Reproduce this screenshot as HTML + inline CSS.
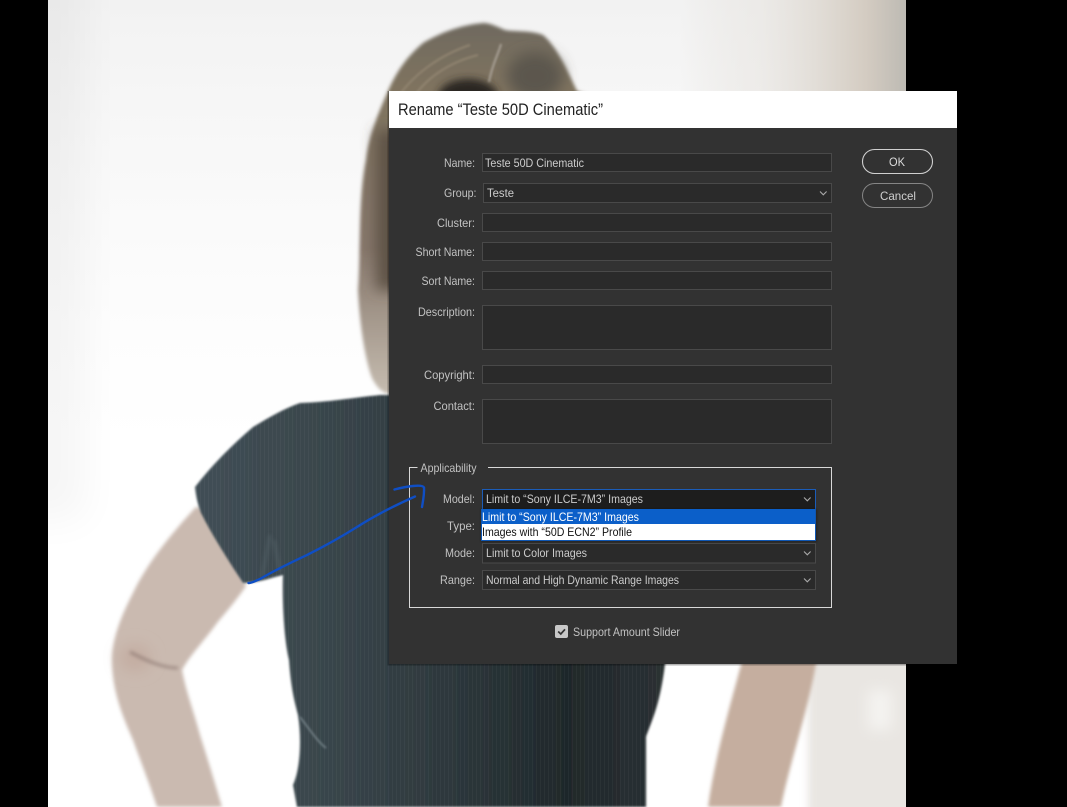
<!DOCTYPE html>
<html><head><meta charset="utf-8"><style>
html,body{margin:0;padding:0;background:#000;width:1067px;height:807px;overflow:hidden}
svg{position:absolute;left:0;top:0;display:block}
text{font-family:"Liberation Sans",sans-serif;font-size:12px;fill:#c2c2c2}
.v{fill:#cccccc}
.f{fill:#2a2a2a;stroke:#494949;stroke-width:1}
.c{fill:none;stroke:#a8a8a8;stroke-width:1.1}
</style></head><body>
<svg width="1067" height="807" viewBox="0 0 1067 807" xmlns="http://www.w3.org/2000/svg">
<defs>
<clipPath id="ph"><rect x="48" y="0" width="858" height="807"/></clipPath>
<filter id="b20" filterUnits="userSpaceOnUse" x="-200" y="-200" width="1500" height="1300"><feGaussianBlur stdDeviation="20"/></filter>
<filter id="b8" filterUnits="userSpaceOnUse" x="-200" y="-200" width="1500" height="1300"><feGaussianBlur stdDeviation="7"/></filter>
<filter id="b4" filterUnits="userSpaceOnUse" x="-200" y="-200" width="1500" height="1300"><feGaussianBlur stdDeviation="4"/></filter>
<filter id="b2" filterUnits="userSpaceOnUse" x="-200" y="-200" width="1500" height="1300"><feGaussianBlur stdDeviation="1.8"/></filter>
<filter id="b1" filterUnits="userSpaceOnUse" x="-200" y="-200" width="1500" height="1300"><feGaussianBlur stdDeviation="1"/></filter>
<linearGradient id="bgv" x1="0" y1="0" x2="0" y2="1"><stop offset="0" stop-color="#f2f2f2"/><stop offset=".19" stop-color="#f8f8f8"/><stop offset=".41" stop-color="#fdfdfd"/><stop offset=".55" stop-color="#fff"/><stop offset="1" stop-color="#fff"/></linearGradient>
<linearGradient id="bgr" x1="0" y1="0" x2="1" y2="0"><stop offset="0" stop-color="#e2ded8" stop-opacity="0"/><stop offset=".35" stop-color="#e8e5e1" stop-opacity=".6"/><stop offset=".65" stop-color="#dfdad3"/><stop offset=".82" stop-color="#d4ccc2"/><stop offset="1" stop-color="#bdbab3"/></linearGradient>
<linearGradient id="hair" gradientUnits="userSpaceOnUse" x1="0" y1="20" x2="0" y2="400"><stop offset="0" stop-color="#6e695e"/><stop offset=".18" stop-color="#7f735f"/><stop offset=".6" stop-color="#85766a"/><stop offset="1" stop-color="#c8bfb3"/></linearGradient>
<linearGradient id="shirt" gradientUnits="userSpaceOnUse" x1="190" y1="0" x2="660" y2="0"><stop offset="0" stop-color="#414f56"/><stop offset=".3" stop-color="#39454b"/><stop offset=".6" stop-color="#2b3539"/><stop offset=".8" stop-color="#1f282b"/><stop offset="1" stop-color="#2a3033"/></linearGradient>
<pattern id="rib" width="4" height="10" patternUnits="userSpaceOnUse"><rect x="0" width="1" height="10" fill="#fff" opacity=".035"/></pattern>
</defs>
<rect width="1067" height="807" fill="#000"/>
<g clip-path="url(#ph)">
<rect x="48" y="0" width="858" height="807" fill="url(#bgv)"/>
<rect x="10" y="-60" width="75" height="580" fill="#000" opacity=".035" filter="url(#b20)"/>
<rect x="680" y="0" width="226" height="91" fill="url(#bgr)"/>
<rect x="808" y="655" width="120" height="170" fill="#e9e6e2" filter="url(#b4)"/>
<rect x="868" y="690" width="24" height="40" fill="#f4f3f0" filter="url(#b8)"/>
<path d="M483 23C460 25 440 33 423 43C405 58 395 75 388 91C376 118 368 140 366 160C358 200 361 250 358 290C360 330 366 362 372 378C378 390 384 394 395 395L600 395L600 100L577 91C565 65 555 45 543 35C530 30 515 32 505 30C498 27 490 23 483 23Z" fill="url(#hair)" filter="url(#b2)"/>
<rect x="376" y="130" width="30" height="160" fill="#5f5246" filter="url(#b8)"/>
<ellipse cx="468" cy="97" rx="30" ry="18" fill="#2b2724" filter="url(#b4)"/>
<ellipse cx="535" cy="76" rx="28" ry="24" fill="#5c574d" filter="url(#b8)"/>
<path d="M470 45C440 55 412 75 396 100M478 55C450 62 425 78 412 100" stroke="#968975" stroke-width="2" fill="none" filter="url(#b1)" opacity=".8"/>
<path d="M501 44C498 55 492 65 489 82" stroke="#a9a196" stroke-width="2" fill="none" filter="url(#b1)"/>
<path d="M196 507C170 535 146 565 133 593C120 618 112 640 112 660C112 690 122 715 133 740C142 765 150 785 157 807L222 807C214 780 208 760 200 735C194 712 186 692 182 670C190 655 205 640 217 623C228 610 238 598 246 586L210 510Z" fill="#cabab0" filter="url(#b2)"/>
<ellipse cx="135" cy="658" rx="16" ry="14" fill="#c4aea3" filter="url(#b8)"/>
<path d="M130 652C145 660 162 668 178 668" stroke="#8a766f" stroke-width="3" fill="none" filter="url(#b2)" opacity=".65"/>
<path d="M745 650L818 650C812 700 790 760 781 807L708 807C716 750 732 700 745 650Z" fill="#c5ae9f" filter="url(#b2)"/>
<g filter="url(#b1)">
<path d="M300 403C285 408 268 418 253 427C232 445 212 465 195 487C196 497 198 505 201 513C212 535 228 560 243 583C258 583 270 578 283 575C282 600 284 640 289 660C291 690 295 703 298 715C302 740 300 770 293 785L297 807L646 807L646 737C652 720 660 705 665 664L665 395L380 395C350 398 330 402 300 403Z" fill="url(#shirt)"/>
</g>
<path d="M300 403C285 408 268 418 253 427C232 445 212 465 195 487C196 497 198 505 201 513C212 535 228 560 243 583C258 583 270 578 283 575C282 600 284 640 289 660C291 690 295 703 298 715C302 740 300 770 293 785L297 807L646 807L646 737C652 720 660 705 665 664L665 395L380 395C350 398 330 402 300 403Z" fill="url(#rib)"/>
<path d="M300 717C310 730 318 742 326 748" stroke="#78868c" stroke-width="1.6" fill="none" filter="url(#b1)"/>
<path d="M262 577L270 535M280 572L274 540" stroke="#5a696f" stroke-width="3" fill="none" filter="url(#b2)" opacity=".5"/>
</g>
<rect x="387.5" y="91" width="570.5" height="574.5" fill="#000" opacity=".3"/>
<rect x="389" y="128" width="568" height="536" fill="#323232"/>
<rect x="389" y="91" width="568" height="37" fill="#fff"/>
<text x="398" y="115" textLength="205" lengthAdjust="spacingAndGlyphs" style="font-size:16.5px;fill:#222">Rename “Teste 50D Cinematic”</text>

<text x="444" y="167" textLength="31" lengthAdjust="spacingAndGlyphs">Name:</text>
<rect class="f" x="482.5" y="153.5" width="349" height="18"/>
<text class="v" x="485" y="167" textLength="99" lengthAdjust="spacingAndGlyphs">Teste 50D Cinematic</text>

<text x="444" y="197" textLength="32.5" lengthAdjust="spacingAndGlyphs">Group:</text>
<rect class="f" x="483.5" y="183.5" width="348" height="19"/>
<text class="v" x="487" y="197" textLength="27" lengthAdjust="spacingAndGlyphs">Teste</text>
<path class="c" d="M820 191.5L823.3 194.8L826.6 191.5"/>

<text x="437" y="227" textLength="38" lengthAdjust="spacingAndGlyphs">Cluster:</text>
<rect class="f" x="482.5" y="213.5" width="349" height="18"/>
<text x="415.5" y="256" textLength="59.5" lengthAdjust="spacingAndGlyphs">Short Name:</text>
<rect class="f" x="482.5" y="242.5" width="349" height="18"/>
<text x="421.5" y="285" textLength="53.5" lengthAdjust="spacingAndGlyphs">Sort Name:</text>
<rect class="f" x="482.5" y="271.5" width="349" height="18"/>
<text x="418" y="316" textLength="57" lengthAdjust="spacingAndGlyphs">Description:</text>
<rect class="f" x="482.5" y="305.5" width="349" height="44"/>
<text x="424" y="379" textLength="51" lengthAdjust="spacingAndGlyphs">Copyright:</text>
<rect class="f" x="482.5" y="365.5" width="349" height="18"/>
<text x="433.5" y="410" textLength="41.5" lengthAdjust="spacingAndGlyphs">Contact:</text>
<rect class="f" x="482.5" y="399.5" width="349" height="44"/>

<rect x="862.5" y="149.5" width="70" height="24" rx="12" fill="#323232" stroke="#d0d0d0" stroke-width="1.1"/>
<text x="889" y="166" textLength="16" lengthAdjust="spacingAndGlyphs" style="fill:#dcdcdc">OK</text>
<rect x="862.5" y="183.5" width="70" height="24" rx="12" fill="#323232" stroke="#858585" stroke-width="1"/>
<text x="880" y="200" textLength="36" lengthAdjust="spacingAndGlyphs" style="fill:#d0d0d0">Cancel</text>

<path d="M417.5 467.5H409.5V607.5H831.5V467.5H488" fill="none" stroke="#d8d8d8" stroke-width="1"/>
<text x="420.5" y="472" textLength="56" lengthAdjust="spacingAndGlyphs">Applicability</text>

<text x="443" y="503" textLength="32" lengthAdjust="spacingAndGlyphs">Model:</text>
<rect x="482.5" y="489.5" width="333" height="20" fill="#1d1d1d" stroke="#1b5cb8" stroke-width="1"/>
<text class="v" x="486" y="503" textLength="157" lengthAdjust="spacingAndGlyphs">Limit to “Sony ILCE-7M3” Images</text>
<path class="c" d="M804 497.5L807.3 500.8L810.6 497.5"/>

<text x="447" y="530" textLength="28" lengthAdjust="spacingAndGlyphs">Type:</text>
<rect class="f" x="482.5" y="516.5" width="333" height="20"/>

<text x="445" y="557" textLength="30" lengthAdjust="spacingAndGlyphs">Mode:</text>
<rect class="f" x="482.5" y="543.5" width="333" height="19.5"/>
<text class="v" x="486" y="557" textLength="101" lengthAdjust="spacingAndGlyphs">Limit to Color Images</text>
<path class="c" d="M804 551.5L807.3 554.8L810.6 551.5"/>

<text x="440" y="584" textLength="35" lengthAdjust="spacingAndGlyphs">Range:</text>
<rect class="f" x="482.5" y="570.5" width="333" height="19"/>
<text class="v" x="486" y="584" textLength="193" lengthAdjust="spacingAndGlyphs">Normal and High Dynamic Range Images</text>
<path class="c" d="M804 578.5L807.3 581.8L810.6 578.5"/>

<rect x="481" y="509" width="336" height="33" fill="#000" opacity=".3" filter="url(#b1)"/>
<rect x="481.5" y="509.5" width="334" height="31" fill="#fff" stroke="#0f57b4" stroke-width="1"/>
<rect x="482" y="509" width="333" height="15" fill="#0b5fc9"/>
<text x="482" y="521" textLength="157" lengthAdjust="spacingAndGlyphs" style="fill:#fff">Limit to “Sony ILCE-7M3” Images</text>
<text x="482" y="536" textLength="150" lengthAdjust="spacingAndGlyphs" style="fill:#111">Images with “50D ECN2” Profile</text>

<rect x="555" y="625" width="13" height="13" rx="2" fill="#c8c8c8"/>
<path d="M558.2 631.5L560.8 634L565 629.3" fill="none" stroke="#333" stroke-width="1.7"/>
<text x="573" y="636" textLength="107" lengthAdjust="spacingAndGlyphs">Support Amount Slider</text>

<path d="M248.5 583C252 583 255 581 260 579C275 570 290 563 307 555C325 546 341 537 357 527C377 514 396 505 415 496.5" fill="none" stroke="#0f4ec4" stroke-width="2.4" stroke-linecap="round"/>
<path d="M394.5 489.5C400 488 407 486.5 413 486C418 485.5 423 485.5 424 487.5C424.5 494 423 501 422 507" fill="none" stroke="#0f4ec4" stroke-width="2.4" stroke-linecap="round"/>
</svg>
</body></html>
